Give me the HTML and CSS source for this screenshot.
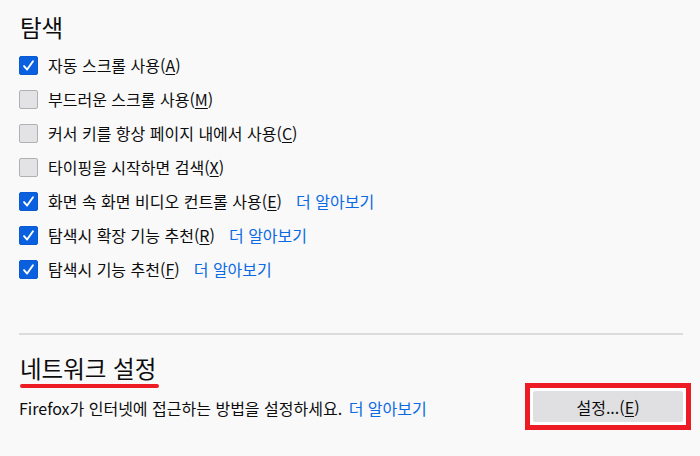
FILE: index.html
```html
<!DOCTYPE html>
<html lang="ko">
<head>
<meta charset="utf-8">
<link rel="stylesheet" href="styles.css">
</head>
<body>
<div class="page">
  <section class="group">
    <h1 class="title">탐색</h1>
    <ul class="options">
      <li class="opt"><span class="box on"><svg viewBox="0 0 16 16"><path d="M3.8 8.6 L6.7 11.8 L12.2 4" /></svg></span><span class="label">자동 스크롤 사용(<u>A</u>)</span></li>
      <li class="opt"><span class="box"></span><span class="label">부드러운 스크롤 사용(<u>M</u>)</span></li>
      <li class="opt"><span class="box"></span><span class="label">커서 키를 항상 페이지 내에서 사용(<u>C</u>)</span></li>
      <li class="opt"><span class="box"></span><span class="label">타이핑을 시작하면 검색(<u>X</u>)</span></li>
      <li class="opt"><span class="box on"><svg viewBox="0 0 16 16"><path d="M3.8 8.6 L6.7 11.8 L12.2 4" /></svg></span><span class="label">화면 속 화면 비디오 컨트롤 사용(<u>E</u>)</span><a class="link">더 알아보기</a></li>
      <li class="opt"><span class="box on"><svg viewBox="0 0 16 16"><path d="M3.8 8.6 L6.7 11.8 L12.2 4" /></svg></span><span class="label">탐색시 확장 기능 추천(<u>R</u>)</span><a class="link">더 알아보기</a></li>
      <li class="opt"><span class="box on"><svg viewBox="0 0 16 16"><path d="M3.8 8.6 L6.7 11.8 L12.2 4" /></svg></span><span class="label">탐색시 기능 추천(<u>F</u>)</span><a class="link">더 알아보기</a></li>
    </ul>
  </section>
  <hr class="sep">
  <section class="group">
    <h1 class="title marked">네트워크 설정</h1>
    <div class="net">
      <p class="desc">Firefox가 인터넷에 접근하는 방법을 설정하세요. <a class="link">더 알아보기</a></p>
      <span class="mark"><button class="btn">설정...(<u>E</u>)</button></span>
    </div>
  </section>
</div>
</body>
</html>
```
FILE: styles.css
```css
html, body {
  margin: 0;
  padding: 0;
  background: #f9f9fa;
}
body {
  font-family: "Noto Sans CJK KR", "Noto Sans", sans-serif;
  color: #0c0c0d;
  font-size: 16px;
}
.page {
  width: 664px;
  padding: 12px 0 0 19px;
}
.title {
  margin: 0;
  font-size: 23.5px;
  font-weight: 400;
  line-height: 30px;
  padding-left: 1px;
}
.options {
  list-style: none;
  margin: 6px 0 0 0;
  padding: 0;
}
.opt {
  height: 34px;
  display: flex;
  align-items: center;
}
.box {
  width: 19px;
  height: 19px;
  box-sizing: border-box;
  border: 1px solid #b1b1b3;
  background: #e3e3e5;
  border-radius: 2px;
  margin-right: 10px;
  flex: none;
  display: flex;
  align-items: center;
  justify-content: center;
}
.box.on {
  background: #0a60df;
  border-color: #0a5bd2;
}
.box svg {
  width: 17px;
  height: 17px;
}
.box path {
  fill: none;
  stroke: #fff;
  stroke-width: 1.8;
  stroke-linecap: round;
  stroke-linejoin: round;
}
.label {
  line-height: 20px;
}
u {
  text-decoration-thickness: 1px;
  text-underline-offset: 2px;
}
.link {
  color: #0a69e3;
  margin-left: 14px;
  cursor: pointer;
}
.desc .link {
  margin-left: 2px;
}
.sep {
  margin: 47px 0 0 0;
  border: 0;
  height: 2px;
  background: #dcdcdf;
}
.sep + .group {
  margin-top: 18px;
}
.marked {
  display: inline-block;
  position: relative;
}
.marked::after {
  content: "";
  position: absolute;
  left: 1px;
  right: -3px;
  bottom: -5px;
  height: 4px;
  border-radius: 2px;
  background: #ed1c24;
}
.net {
  display: flex;
  align-items: center;
  justify-content: space-between;
  margin-top: 0;
}
.desc {
  margin: 0;
  line-height: 20px;
  padding-top: 2px;
}
.mark {
  display: flex;
  border: 5px solid #ed1c24;
  padding: 3px;
  background: #fff;
  margin-right: -8px;
}
.btn {
  width: 150px;
  height: 31px;
  border: 0;
  border-radius: 2px;
  background: #e0e0e2;
  color: #0c0c0d;
  font-family: inherit;
  font-size: 16px;
  padding: 0;
}
```
